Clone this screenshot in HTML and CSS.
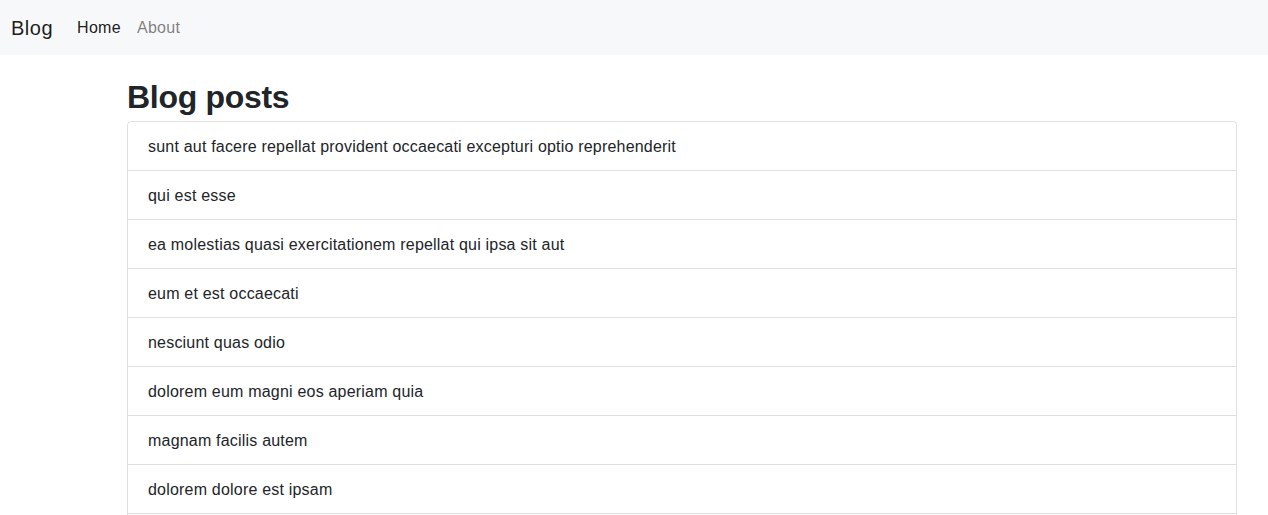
FILE: index.html
```html
<!DOCTYPE html>
<html lang="en">
<head>
<meta charset="utf-8">
<title>Blog</title>
<link rel="stylesheet" href="styles.css">
</head>
<body>
<nav class="navbar">
  <a class="brand" href="#">Blog</a>
  <ul class="nav">
    <li><a class="nav-link active" href="#">Home</a></li>
    <li><a class="nav-link" href="#">About</a></li>
  </ul>
</nav>
<main class="main">
  <h1 class="title">Blog posts</h1>
  <ul class="list-group">
    <li class="list-item">sunt aut facere repellat provident occaecati excepturi optio reprehenderit</li>
    <li class="list-item">qui est esse</li>
    <li class="list-item">ea molestias quasi exercitationem repellat qui ipsa sit aut</li>
    <li class="list-item">eum et est occaecati</li>
    <li class="list-item">nesciunt quas odio</li>
    <li class="list-item">dolorem eum magni eos aperiam quia</li>
    <li class="list-item">magnam facilis autem</li>
    <li class="list-item">dolorem dolore est ipsam</li>
    <li class="list-item">nesciunt iure omnis dolorem tempora et accusantium</li>
  </ul>
</main>
</body>
</html>
```

FILE: styles.css
```css
* { box-sizing: border-box; }
html, body { margin: 0; padding: 0; }
body {
  font-family: "Liberation Sans", Arial, Helvetica, sans-serif;
  font-size: 16px;
  line-height: 1.5;
  color: #212529;
  background: #fff;
}
.navbar {
  display: flex;
  align-items: center;
  height: 55px;
  padding: 0 16px 0 11px;
  background: #f7f8f9;
}
.brand {
  font-size: 20px;
  line-height: 30px;
  letter-spacing: 0.5px;
  color: rgba(0, 0, 0, 0.9);
  text-decoration: none;
  margin-right: 16px;
  padding-top: 1px;
}
.nav {
  display: flex;
  list-style: none;
  margin: 0;
  padding: 0;
}
.nav-link {
  display: block;
  padding: 8px 8px;
  letter-spacing: 0.3px;
  color: rgba(0, 0, 0, 0.5);
  text-decoration: none;
}
.nav-link.active { color: rgba(0, 0, 0, 0.9); }
.main {
  padding: 0 31px 0 127px;
}
.title {
  font-size: 32px;
  font-weight: 700;
  line-height: 38px;
  letter-spacing: -0.3px;
  margin: 23px 0 5px;
  color: #212529;
}
.list-group {
  list-style: none;
  margin: 0;
  padding: 0;
  border: 1px solid rgba(0, 0, 0, 0.125);
  border-radius: 4px;
}
.list-item {
  padding: 13px 20px 11px;
  letter-spacing: 0.2px;
  border-top: 1px solid rgba(0, 0, 0, 0.125);
}
.list-item:first-child { border-top: 0; }
```
